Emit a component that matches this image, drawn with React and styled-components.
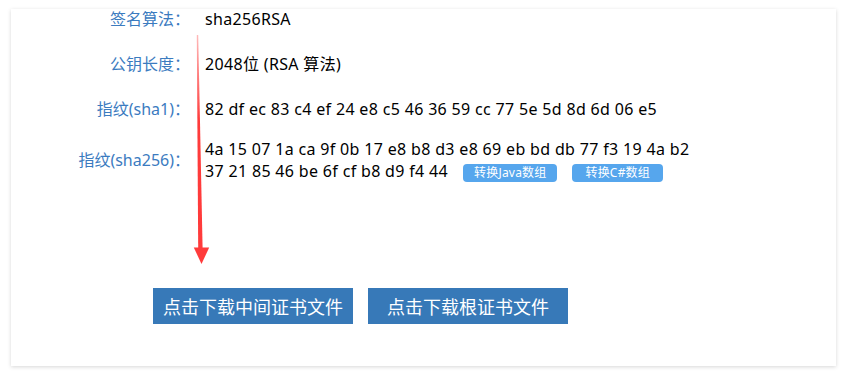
import React from "react";
import styled, { createGlobalStyle } from "styled-components";

const Global = createGlobalStyle`
  html, body { margin: 0; padding: 0; background: #ffffff; }
  body { font-family: "Noto Sans", "Noto Sans CJK SC", sans-serif; }
  * { box-sizing: border-box; }
`;

const Page = styled.div`
  position: relative;
  width: 856px;
  height: 379px;
  padding: 13px 20px 9px 11px;
  overflow: hidden;
`;

const Card = styled.div`
  width: 825px;
  height: 357px;
  background: #fff;
  box-shadow: 0 1px 4px rgba(0, 0, 0, 0.16);
`;

const List = styled.div`
  display: flex;
  flex-direction: column;
  margin-top: -4px;
`;

const Row = styled.div`
  display: flex;
  align-items: center;
  gap: 15px;
  margin-top: ${(p) => p.$gap}px;
  font-size: 16px;
  line-height: 21px;
`;

const Label = styled.div`
  width: 179px;
  flex: none;
  text-align: right;
  color: #3b7bbf;
  white-space: nowrap;
`;

const Value = styled.div`
  color: #000;
  white-space: nowrap;
  letter-spacing: 0.33px;
`;

const Line = styled.div`
  display: flex;
  align-items: center;
`;

const Badge = styled.span`
  display: inline-block;
  margin-left: ${(p) => p.$ml}px;
  height: 18px;
  line-height: 18px;
  padding: 0 ${(p) => p.$px}px;
  margin-top: 4px;
  border-radius: 4px;
  background: #56a6ed;
  color: #fff;
  font-size: 12px;
  letter-spacing: 0.2px;
`;

const Buttons = styled.div`
  display: flex;
  gap: 15px;
  margin-top: 106px;
  padding-left: 142px;
`;

const Button = styled.button`
  width: 200px;
  height: 36px;
  border: none;
  border-radius: 0;
  background: #3779b8;
  color: #fff;
  font-family: "Noto Sans CJK SC", sans-serif;
  font-size: 18px;
  padding: 0;
  cursor: pointer;
`;

const Overlay = styled.svg`
  position: absolute;
  left: 0;
  top: 0;
  pointer-events: none;
`;

export default function App() {
  return (
    <>
      <Global />
      <Page>
        <Card>
          <List>
            <Row $gap={0}>
              <Label>签名算法：</Label>
              <Value>sha256RSA</Value>
            </Row>
            <Row $gap={24}>
              <Label>公钥长度：</Label>
              <Value>2048位 (RSA 算法)</Value>
            </Row>
            <Row $gap={24}>
              <Label>指纹(sha1)：</Label>
              <Value>82 df ec 83 c4 ef 24 e8 c5 46 36 59 cc 77 5e 5d 8d 6d 06 e5</Value>
            </Row>
            <Row $gap={19}>
              <Label>指纹(sha256)：</Label>
              <Value>
                <Line>4a 15 07 1a ca 9f 0b 17 e8 b8 d3 e8 69 eb bd db 77 f3 19 4a b2</Line>
                <Line>
                  37 21 85 46 be 6f cf b8 d9 f4 44
                  <Badge $ml={15} $px={11}>转换Java数组</Badge>
                  <Badge $ml={15} $px={13}>转换C#数组</Badge>
                </Line>
              </Value>
            </Row>
          </List>
          <Buttons>
            <Button>点击下载中间证书文件</Button>
            <Button>点击下载根证书文件</Button>
          </Buttons>
        </Card>
        <Overlay width="856" height="379" viewBox="0 0 856 379">
          <defs>
            <linearGradient id="fade" x1="0" y1="35" x2="0" y2="120" gradientUnits="userSpaceOnUse">
              <stop offset="0" stopColor="#ff3b3b" stopOpacity="0.35" />
              <stop offset="1" stopColor="#ff3b3b" stopOpacity="1" />
            </linearGradient>
          </defs>
          <polygon points="196.8,35 198.2,35 202.6,248 198.2,248" fill="url(#fade)" />
          <polygon points="193.8,247.5 209.2,247.5 201.5,264" fill="#ff3b3b" />
        </Overlay>
      </Page>
    </>
  );
}
